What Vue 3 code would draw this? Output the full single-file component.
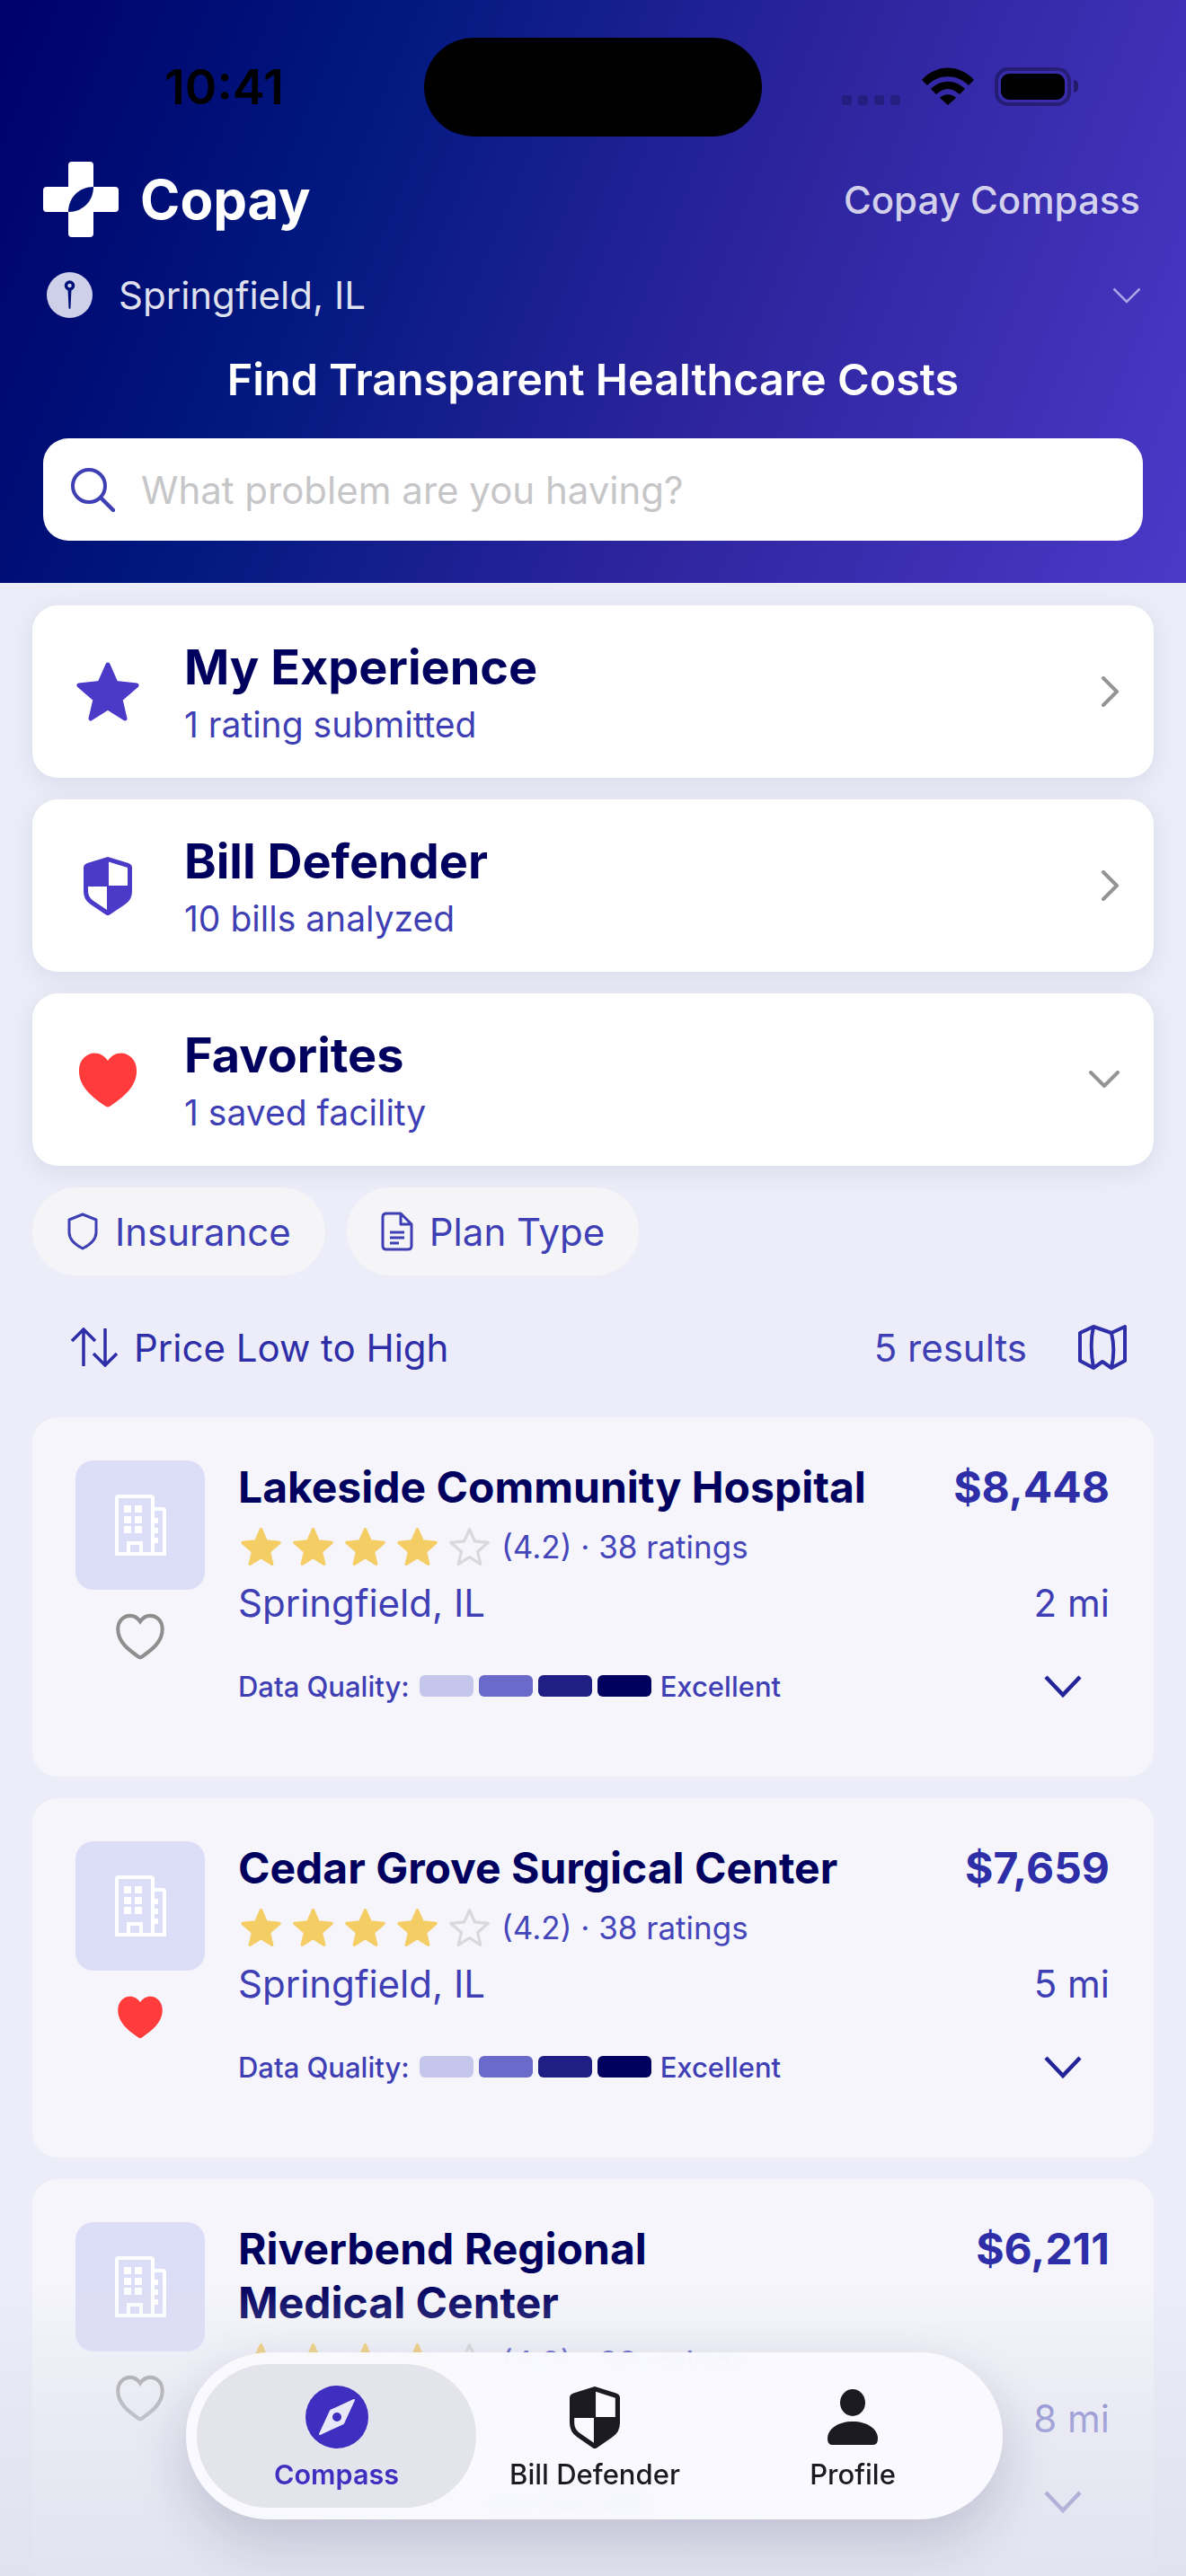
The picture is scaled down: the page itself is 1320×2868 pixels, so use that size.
<script setup>
const STAR = 'M36 4 L45 24.500 L68 27 L50 42.500 L55 64 L36 52 L17 64 L22 42.500 L4 27 L27 24.500 Z'
const HEART = 'M12 21.6c-.3 0-.6-.1-.9-.3C6.400 18.200 1 14.600 1 8.600 1 5 3.700 2.400 7 2.400c2 0 3.800 1 5 2.700 1.200-1.700 3-2.700 5-2.700 3.300 0 6 2.600 6 6.200 0 6-5.400 9.600-10.100 12.700-.3.200-.6.300-.9.300z'
const SHIELD = 'M27 0 L50 7 Q54 8.500 54 12 V38 Q54 48 46 53 L29 64.500 Q27 65.500 25 64.500 L8 53 Q0 48 0 38 V12 Q0 8.500 4 7 Z'
const SHIELD_TR = 'M28 5.500 L49 12 V32 H28 Z'
const SHIELD_BL = 'M5 33 H26 V59 L11 49 Q5 45 5 38 Z'

const rows = [
  { title: 'My Experience', sub: '1 rating submitted', icon: 'star', open: false },
  { title: 'Bill Defender', sub: '10 bills analyzed', icon: 'shield', open: false },
  { title: 'Favorites', sub: '1 saved facility', icon: 'heart', open: true }
]

const facilities = [
  { name: 'Lakeside Community Hospital', price: '$8,448', miles: '2 mi', saved: false },
  { name: 'Cedar Grove Surgical Center', price: '$7,659', miles: '5 mi', saved: true },
  { name: 'Riverbend Regional Medical Center', price: '$6,211', miles: '8 mi', saved: false, narrow: true }
]

const qualityColors = ['#c5c6ec', '#6a6aca', '#1e1e85', '#00005f']
</script>

<template>
  <div class="page">
    <header class="hero">
      <div class="status">
        <span class="time">10:41</span>
        <div class="island"></div>
        <div class="status-icons">
          <div class="signal"><i></i><i></i><i></i><i></i></div>
          <svg class="wifi" width="58" height="42" viewBox="0 0 58 42">
            <path d="M0 14 C16 -4 42 -4 58 14 L52 20 C39 7 19 7 6 20 Z" fill="#000" />
            <path d="M10 24 C21 13 37 13 48 24 L42 30 C33 22 25 22 16 30 Z" fill="#000" />
            <path d="M20 34 C25 29 33 29 38 34 L29 42 Z" fill="#000" />
          </svg>
          <div class="battery"><div class="battery-fill"></div></div>
          <div class="battery-nub"></div>
        </div>
      </div>

      <div class="brand-row">
        <div class="brand">
          <svg width="84" height="84" viewBox="0 0 84 84">
            <path d="M32 0 H52 Q56 0 56 4 V28 H80 Q84 28 84 32 V52 Q84 56 80 56 H56 V80 Q56 84 52 84 H32 Q28 84 28 80 V56 H4 Q0 56 0 52 V32 Q0 28 4 28 H28 V4 Q28 0 32 0 Z" fill="#fff" />
            <path d="M56 28 C56 44 44 56 28 56 C28 40 40 28 56 28 Z" fill="#00107a" />
          </svg>
          <span class="brand-name">Copay</span>
        </div>
        <span class="brand-link">Copay Compass</span>
      </div>

      <div class="location">
        <svg width="51" height="51" viewBox="0 0 51 51">
          <circle cx="25.500" cy="25.500" r="25.500" fill="#cdd0e8" />
          <circle cx="25.500" cy="15" r="4" fill="none" stroke="#00107a" stroke-width="3.500" />
          <path d="M23.500 19 H27.500 L26.500 40 Q25.500 42 24.500 40 Z" fill="#00107a" />
        </svg>
        <span class="location-name">Springfield, IL</span>
        <svg class="location-chevron" width="32" height="18" viewBox="0 0 32 18">
          <path d="M1.500 1.500 L16 16 L30.500 1.500" fill="none" stroke="#a9a5e6" stroke-width="2.500" />
        </svg>
      </div>

      <h1 class="hero-title">Find Transparent Healthcare Costs</h1>

      <div class="search">
        <svg width="50" height="50" viewBox="0 0 50 50">
          <circle cx="21" cy="21" r="18" fill="none" stroke="#3f3fb5" stroke-width="4" />
          <path d="M34 34 L48 48" stroke="#3f3fb5" stroke-width="4.500" stroke-linecap="round" />
        </svg>
        <span class="placeholder">What problem are you having?</span>
      </div>
    </header>

    <main class="content">
      <section class="summary-list">
        <div v-for="row in rows" :key="row.title" class="summary">
          <div class="summary-icon">
            <svg v-if="row.icon === 'star'" width="72" height="68" viewBox="0 0 72 68">
              <path :d="STAR" fill="#4b39c8" stroke="#4b39c8" stroke-width="5" stroke-linejoin="round" />
            </svg>
            <svg v-else-if="row.icon === 'shield'" width="54" height="65" viewBox="0 0 54 65">
              <path :d="SHIELD" fill="#4b39c8" />
              <path :d="SHIELD_TR" fill="#fff" />
              <path :d="SHIELD_BL" fill="#fff" />
            </svg>
            <svg v-else width="70" height="75" viewBox="0 0 24 24" preserveAspectRatio="none">
              <path :d="HEART" fill="#ff3b3b" />
            </svg>
          </div>
          <div class="summary-text">
            <div class="summary-title">{{ row.title }}</div>
            <div class="summary-sub">{{ row.sub }}</div>
          </div>
          <svg v-if="row.open" class="summary-down" width="34" height="20" viewBox="0 0 34 20">
            <path d="M2 2 L17 17 L32 2" fill="none" stroke="#949494" stroke-width="4" stroke-linecap="round" stroke-linejoin="round" />
          </svg>
          <svg v-else class="summary-next" width="20" height="34" viewBox="0 0 20 34">
            <path d="M2 2 L17 17 L2 32" fill="none" stroke="#949494" stroke-width="4" stroke-linecap="round" stroke-linejoin="round" />
          </svg>
        </div>
      </section>

      <div class="chips">
        <div class="chip">
          <svg width="36" height="42" viewBox="0 0 36 42">
            <path d="M18 2 L33 8 V22 C33 30 26 36 18 40 C10 36 3 30 3 22 V8 Z" fill="none" stroke="#3f3fb5" stroke-width="3" stroke-linejoin="round" />
          </svg>
          <span>Insurance</span>
        </div>
        <div class="chip">
          <svg width="36" height="44" viewBox="0 0 36 44">
            <path d="M6 2 H22 L34 14 V38 Q34 42 30 42 H6 Q2 42 2 38 V6 Q2 2 6 2 Z M22 2 V14 H34" fill="none" stroke="#3f3fb5" stroke-width="3" stroke-linejoin="round" />
            <path d="M10 23 H26 M10 29 H26 M10 35 H20" stroke="#3f3fb5" stroke-width="3" />
          </svg>
          <span>Plan Type</span>
        </div>
      </div>

      <div class="sort-row">
        <svg width="54" height="44" viewBox="0 0 54 44">
          <path d="M15 43 V2 M2 15 L15 2 L28 15 M39 1 V42 M26 29 L39 42 L52 29" fill="none" stroke="#2e2ea8" stroke-width="3.500" />
        </svg>
        <span class="sort-label">Price Low to High</span>
        <span class="results">5 results</span>
        <svg width="56" height="52" viewBox="0 0 56 52">
          <path d="M3 10 L18 3 L38 10 L53 3 V41 L38 49 L28 42 L18 49 L3 41 Z M18 3 C15 16 15 32 18 49 M38 10 C41 22 41 36 38 49" fill="none" stroke="#2e2ea8" stroke-width="4" stroke-linejoin="round" />
        </svg>
      </div>

      <section class="facilities">
        <article v-for="item in facilities" :key="item.name" class="facility">
          <div class="facility-side">
            <div class="thumb">
              <svg width="58" height="70" viewBox="0 0 58 70">
                <path d="M3 67 V5 Q3 3 5 3 H41 Q43 3 43 5 V67 Z M43 17 H54 Q56 17 56 19 V67 H3" fill="none" stroke="#fff" stroke-width="4" />
                <path d="M11 13h8v8h-8zM23 13h8v8h-8zM11 25h8v8h-8zM23 25h8v8h-8zM11 36h8v8h-8zM23 36h8v8h-8zM43 27h6v6h-6zM43 38h6v6h-6zM43 49h6v6h-6z" fill="#fff" />
                <path d="M16 67 V55 H30 V67" fill="none" stroke="#fff" stroke-width="4" />
              </svg>
            </div>
            <svg class="save" width="54" height="58" viewBox="0 0 24 24" preserveAspectRatio="none">
              <path v-if="item.saved" :d="HEART" fill="#ff3b3b" />
              <path v-else :d="HEART" fill="none" stroke="#8f8f8f" stroke-width="1.800" />
            </svg>
          </div>
          <div class="facility-main">
            <div class="line-top">
              <h2 class="facility-name" :class="{ narrow: item.narrow }">{{ item.name }}</h2>
              <span class="price">{{ item.price }}</span>
            </div>
            <div class="rating">
              <svg v-for="n in 4" :key="n" width="47" height="44" viewBox="0 0 72 68">
                <path :d="STAR" fill="#f4cd65" stroke="#f4cd65" stroke-width="5" stroke-linejoin="round" />
              </svg>
              <svg width="47" height="44" viewBox="0 0 72 68">
                <path :d="STAR" fill="none" stroke="#d9d9dc" stroke-width="5" stroke-linejoin="round" />
              </svg>
              <span class="rating-text">(4.2) · 38 ratings</span>
            </div>
            <div class="line-place">
              <span>Springfield, IL</span>
              <span>{{ item.miles }}</span>
            </div>
            <div class="line-quality">
              <span>Data Quality:</span>
              <div class="bars">
                <i v-for="color in qualityColors" :key="color" :style="{ background: color }"></i>
              </div>
              <span>Excellent</span>
              <svg class="expand" width="42" height="26" viewBox="0 0 42 26">
                <path d="M2 3 L21 23 L40 3" fill="none" stroke="#23239a" stroke-width="4.500" />
              </svg>
            </div>
          </div>
        </article>
      </section>
    </main>

    <div class="fade"></div>

    <nav class="tabbar">
      <div class="tab tab-active">
        <div class="tab-icon">
          <svg width="70" height="70" viewBox="0 0 70 70">
            <circle cx="35" cy="35" r="35" fill="#3f2fc0" />
            <path d="M54 16 L42 42 L16 54 L28 28 Z" fill="#e9e8f8" stroke="#e9e8f8" stroke-width="2" stroke-linejoin="round" />
            <circle cx="35" cy="35" r="5" fill="#3f2fc0" />
          </svg>
        </div>
        <span>Compass</span>
      </div>
      <div class="tab tab-bill">
        <div class="tab-icon">
          <svg width="56" height="69" viewBox="0 0 54 65" preserveAspectRatio="none">
            <path :d="SHIELD" fill="#1a1a20" />
            <path :d="SHIELD_TR" fill="#fafaff" />
            <path :d="SHIELD_BL" fill="#fafaff" />
          </svg>
        </div>
        <span>Bill Defender</span>
      </div>
      <div class="tab tab-profile">
        <div class="tab-icon">
          <svg width="58" height="62" viewBox="0 0 58 62">
            <ellipse cx="29" cy="15" rx="14" ry="15" fill="#1a1a20" />
            <path d="M1 55 C1 44 13 36 29 36 C45 36 57 44 57 55 Q57 62 52 62 H6 Q1 62 1 55 Z" fill="#1a1a20" />
          </svg>
        </div>
        <span>Profile</span>
      </div>
    </nav>
  </div>
</template>

<style scoped>
.page {
  position: relative;
  width: 1320px;
  height: 2868px;
  overflow: hidden;
  background: #ecedf8;
  font-family: Inter, "Noto Sans", sans-serif;
}

.hero {
  box-sizing: border-box;
  height: 649px;
  padding: 0 48px;
  background: linear-gradient(112deg, #00006a 0%, #00187f 28%, #2c249c 60%, #4b39c8 100%);
}

.status {
  display: flex;
  margin: 0 -48px;
  padding-top: 42px;
  height: 110px;
}

.time {
  width: 472px;
  box-sizing: border-box;
  padding-left: 183px;
  font-size: 54px;
  font-weight: 600;
  line-height: 110px;
  color: #000;
}

.island {
  width: 376px;
  height: 110px;
  border-radius: 55px;
  background: #000;
}

.status-icons {
  display: flex;
  align-items: flex-start;
  padding: 33px 0 0 89px;
}

.signal {
  display: flex;
  gap: 7px;
  margin-top: 31px;
}

.signal i {
  width: 11px;
  height: 11px;
  border-radius: 3px;
  background: rgba(0, 0, 0, 0.2);
}

.wifi {
  margin-left: 24px;
}

.battery {
  box-sizing: border-box;
  width: 85px;
  height: 43px;
  margin-left: 23px;
  padding: 3px;
  border: 4px solid rgba(0, 0, 0, 0.32);
  border-radius: 15px;
}

.battery-fill {
  width: 100%;
  height: 100%;
  border-radius: 9px;
  background: #000;
}

.battery-nub {
  width: 5px;
  height: 14px;
  margin: 14px 0 0 3px;
  border-radius: 0 6px 6px 0;
  background: rgba(0, 0, 0, 0.4);
}

.brand-row {
  display: flex;
  align-items: center;
  justify-content: space-between;
  height: 84px;
  margin-top: 28px;
}

.brand {
  display: flex;
  align-items: center;
  gap: 24px;
}

.brand-name {
  font-size: 60px;
  font-weight: 700;
  color: #fff;
}

.brand-link {
  margin-right: 3px;
  font-size: 42px;
  font-weight: 500;
  color: rgba(255, 255, 255, 0.8);
}

.location {
  display: flex;
  align-items: center;
  height: 51px;
  margin: 39px 2px 0 4px;
}

.location-name {
  margin-left: 29px;
  font-size: 42px;
  color: rgba(255, 255, 255, 0.88);
}

.location-chevron {
  margin-left: auto;
}

.hero-title {
  margin: 39px 0 0;
  font-size: 48.5px;
  font-weight: 600;
  line-height: 60px;
  text-align: center;
  color: #fff;
}

.search {
  display: flex;
  align-items: center;
  gap: 29px;
  height: 114px;
  margin-top: 35px;
  padding-left: 30px;
  border-radius: 28px;
  background: #fff;
}

.placeholder {
  font-size: 42px;
  color: #c6c6c8;
}

.content {
  padding: 25px 36px 0;
}

.summary-list {
  display: flex;
  flex-direction: column;
  gap: 24px;
}

.summary {
  display: flex;
  align-items: center;
  height: 192px;
  padding-left: 48px;
  border-radius: 28px;
  background: #fff;
  box-shadow: 0 6px 28px rgba(40, 40, 110, 0.09);
}

.summary-icon {
  display: flex;
  align-items: center;
  justify-content: center;
  width: 72px;
  margin-right: 49px;
}

.summary-text {
  flex: 1;
  padding-top: 4px;
}

.summary-title {
  font-size: 54px;
  font-weight: 700;
  line-height: 60px;
  color: #00005f;
}

.summary-sub {
  margin-top: 10px;
  font-size: 39px;
  line-height: 48px;
  color: #3f3fb5;
}

.summary-next {
  margin-right: 38px;
}

.summary-down {
  margin-right: 38px;
}

.chips {
  display: flex;
  gap: 24px;
  margin-top: 24px;
}

.chip {
  display: flex;
  align-items: center;
  gap: 18px;
  height: 98px;
  padding: 0 38px;
  border-radius: 49px;
  background: #f5f5f7;
  font-size: 42px;
  color: #3f3fb5;
}

.sort-row {
  display: flex;
  align-items: center;
  height: 56px;
  margin-top: 52px;
  padding: 0 29px 0 42px;
  font-size: 42px;
  color: #2e2ea8;
}

.sort-label {
  margin-left: 17px;
}

.results {
  margin: 0 56px 0 auto;
  font-size: 42px;
  color: #3f3fb5;
}

.facilities {
  display: flex;
  flex-direction: column;
  gap: 24px;
  margin-top: 50px;
}

.facility {
  display: flex;
  gap: 37px;
  padding: 48px 49px 83px 48px;
  border-radius: 28px;
  background: #f5f5fb;
}

.facility-side {
  display: flex;
  flex-direction: column;
  align-items: center;
  width: 144px;
  flex-shrink: 0;
}

.thumb {
  display: flex;
  align-items: center;
  justify-content: center;
  width: 144px;
  height: 144px;
  border-radius: 20px;
  background: #dcddf6;
}

.save {
  margin-top: 23px;
}

.facility-main {
  flex: 1;
  min-width: 0;
}

.line-top {
  display: flex;
  align-items: flex-start;
  justify-content: space-between;
}

.facility-name {
  margin: 0;
  font-size: 48px;
  font-weight: 700;
  line-height: 60px;
  color: #00005f;
}

.facility-name.narrow {
  width: 600px;
}

.price {
  font-size: 48px;
  font-weight: 700;
  line-height: 60px;
  color: #2e2ea8;
}

.rating {
  display: flex;
  align-items: center;
  gap: 11px;
  height: 48px;
  margin: 12px 0 0 2px;
}

.rating-text {
  margin-left: 1px;
  font-size: 35px;
  color: #4646bb;
}

.line-place {
  display: flex;
  justify-content: space-between;
  height: 52px;
  margin-top: 13px;
  font-size: 42px;
  line-height: 52px;
  color: #3f3fb5;
}

.line-quality {
  display: flex;
  align-items: center;
  height: 36px;
  margin-top: 48px;
  font-size: 31px;
  font-weight: 500;
  color: #3f3fb5;
}

.bars {
  display: flex;
  gap: 6px;
  margin: 0 10px 0 11px;
}

.bars i {
  width: 60px;
  height: 24px;
  border-radius: 6px;
}

.expand {
  margin: 0 31px 0 auto;
}

.fade {
  position: absolute;
  left: 0;
  right: 0;
  top: 2540px;
  bottom: 0;
  background: linear-gradient(to bottom, rgba(226, 227, 239, 0) 0%, rgba(226, 227, 239, 0.6) 45%, rgba(224, 225, 238, 0.88) 100%);
}

.tabbar {
  position: absolute;
  left: 207px;
  top: 2619px;
  box-sizing: border-box;
  display: flex;
  width: 909px;
  height: 186px;
  padding: 13px 12px;
  border-radius: 93px;
  background: rgba(250, 250, 255, 0.94);
  backdrop-filter: blur(10px);
  box-shadow: 0 24px 60px rgba(30, 30, 70, 0.18);
}

.tab {
  display: flex;
  flex-direction: column;
  align-items: center;
  padding-top: 24px;
  font-size: 31px;
  font-weight: 500;
  color: #1a1a20;
}

.tab-icon {
  display: flex;
  align-items: center;
  justify-content: center;
  height: 70px;
}

.tab span {
  margin-top: 11px;
  line-height: 36px;
}

.tab-active {
  width: 311px;
  border-radius: 80px;
  background: #e4e4ec;
  color: #3f2fc0;
  font-size: 30.5px;
  font-weight: 600;
}

.tab-bill {
  width: 264px;
}

.tab-profile {
  flex: 1;
}
</style>
